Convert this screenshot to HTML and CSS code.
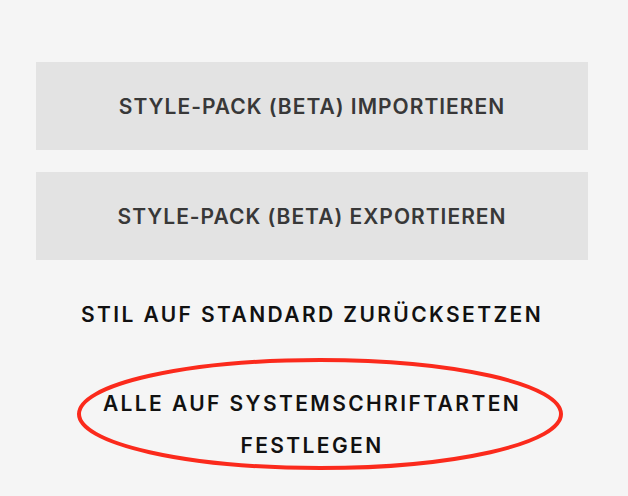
FILE: index.html
```html
<!DOCTYPE html>
<html lang="de">
<head>
<meta charset="utf-8">
<link rel="stylesheet" href="styles.css">
</head>
<body>
<div class="panel">
  <button class="btn">STYLE-PACK (BETA) IMPORTIEREN</button>
  <button class="btn">STYLE-PACK (BETA) EXPORTIEREN</button>
  <div class="link link-reset">STIL AUF STANDARD ZURÜCKSETZEN</div>
  <div class="link link-system">
    <span class="label">ALLE AUF SYSTEMSCHRIFTARTEN<br>FESTLEGEN</span>
    <svg class="circle" width="490" height="116" viewBox="0 0 490 116">
      <ellipse cx="245" cy="58" rx="241" ry="54" fill="none" stroke="#fb2a1c" stroke-width="4"/>
    </svg>
  </div>
</div>
</body>
</html>
```
FILE: styles.css
```css
html, body {
  margin: 0;
  padding: 0;
  background: #f5f5f5;
  height: 100%;
  overflow: hidden;
}
.panel {
  width: 552px;
  margin-left: 36px;
  padding-top: 62px;
  display: flex;
  flex-direction: column;
  font-family: Inter, "Liberation Sans", sans-serif;
  font-weight: 600;
  font-size: 21px;
  letter-spacing: 1px;
}
.btn {
  height: 88px;
  border: none;
  background: #e3e3e3;
  color: #383838;
  font: inherit;
  letter-spacing: inherit;
  padding: 0;
  margin: 0 0 22px 0;
}
.link {
  text-align: center;
  color: #111;
  letter-spacing: 2.4px;
}
.link-reset {
  margin-top: 22px;
  line-height: 22px;
}
.link-system {
  position: relative;
  margin-top: 57px;
  line-height: 42px;
}
.label {
  position: relative;
  z-index: 1;
}
.circle {
  position: absolute;
  left: 39px;
  top: -27px;
}
```
